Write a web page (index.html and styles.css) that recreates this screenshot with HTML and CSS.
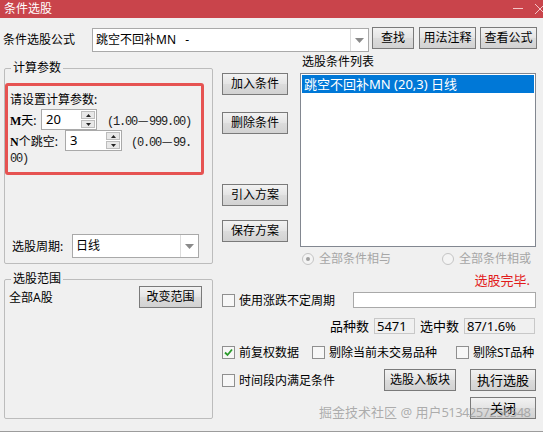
FILE: index.html
```html
<!DOCTYPE html>
<html lang="zh-CN">
<head>
    <meta charset="UTF-8">
    <title>条件选股</title>
    <link rel="stylesheet" href="styles.css">
</head>
<body>
    <div class="window">
        <div class="titlebar">
            <span class="title">条件选股</span>
            <div class="caption-btns">
                <svg class="cap-min" width="12" height="10" viewBox="0 0 12 10"><line x1="1" y1="6.5" x2="11" y2="6.5" stroke="#f3c6c8" stroke-width="1"/></svg>
                <svg class="cap-close" width="12" height="12" viewBox="0 0 12 12"><path d="M1 1 L11 11 M11 1 L1 11" stroke="#f3c6c8" stroke-width="1"/></svg>
            </div>
        </div>

        <div class="formula-row">
            <span class="formula-label">条件选股公式</span>
            <div class="combo formula-combo">
                <span class="combo-text">跳空不回补MN&nbsp;&nbsp;&nbsp;-</span>
                <span class="combo-arrow"><svg width="9" height="5" viewBox="0 0 9 5"><path d="M0 0 H9 L4.5 5 Z" fill="#8a8a8a"/></svg></span>
            </div>
            <button class="btn btn-find">查找</button>
            <button class="btn btn-usage">用法注释</button>
            <button class="btn btn-view">查看公式</button>
        </div>

        <div class="main">
            <div class="left-col">
                <fieldset class="group calc-group">
                    <legend>计算参数</legend>
                    <div class="param-box">
                        <div class="prompt">请设置计算参数:</div>
                        <div class="param-row">
                            <span class="param-label m-label"><span class="serif">M</span>天:</span>
                            <div class="spin spin-m">
                                <span class="spin-value">20</span>
                                <span class="spin-btns">
                                    <span class="spin-btn"><svg width="5" height="3" viewBox="0 0 5 3"><path d="M0 3 H5 L2.5 0 Z" fill="#222"/></svg></span>
                                    <span class="spin-btn"><svg width="5" height="3" viewBox="0 0 5 3"><path d="M0 0 H5 L2.5 3 Z" fill="#222"/></svg></span>
                                </span>
                            </div>
                            <span class="range range-m">(1.00<span class="dash">—</span>999.00)</span>
                        </div>
                        <div class="param-row">
                            <span class="param-label n-label"><span class="serif">N</span>个跳空:</span>
                            <div class="spin spin-n">
                                <span class="spin-value">3</span>
                                <span class="spin-btns">
                                    <span class="spin-btn"><svg width="5" height="3" viewBox="0 0 5 3"><path d="M0 3 H5 L2.5 0 Z" fill="#222"/></svg></span>
                                    <span class="spin-btn"><svg width="5" height="3" viewBox="0 0 5 3"><path d="M0 0 H5 L2.5 3 Z" fill="#222"/></svg></span>
                                </span>
                            </div>
                            <span class="range range-n">(0.00<span class="dash">—</span>99.</span>
                        </div>
                        <div class="range range-wrap">00)</div>
                    </div>
                    <div class="period-row">
                        <span class="period-label">选股周期:</span>
                        <div class="combo period-combo">
                            <span class="combo-text">日线</span>
                            <span class="combo-arrow"><svg width="9" height="5" viewBox="0 0 9 5"><path d="M0 0 H9 L4.5 5 Z" fill="#8a8a8a"/></svg></span>
                        </div>
                    </div>
                </fieldset>

                <fieldset class="group range-group">
                    <legend>选股范围</legend>
                    <div class="scope-row">
                        <span>全部A股</span>
                        <button class="btn btn-scope">改变范围</button>
                    </div>
                </fieldset>
            </div>

            <div class="right-col">
                <div class="top-area">
                    <div class="btn-col">
                        <button class="btn side-btn">加入条件</button>
                        <button class="btn side-btn btn-del">删除条件</button>
                        <button class="btn side-btn btn-import">引入方案</button>
                        <button class="btn side-btn btn-save">保存方案</button>
                    </div>
                    <div class="list-col">
                        <div class="list-title">选股条件列表</div>
                        <div class="listbox">
                            <div class="list-item selected">跳空不回补MN (20,3) 日线</div>
                        </div>
                    </div>
                </div>

                <div class="radio-row">
                    <span class="radio-item radio-and"><span class="radio checked"></span>全部条件相与</span>
                    <span class="radio-item radio-or"><span class="radio"></span>全部条件相或</span>
                </div>

                <div class="status-row">选股完毕.</div>

                <div class="check-row period-check">
                    <span class="check-item"><span class="checkbox"></span>使用涨跌不定周期</span>
                    <div class="text-field"></div>
                </div>

                <div class="count-row">
                    <span>品种数</span>
                    <span class="count-field count-total">5471</span>
                    <span class="count-label">选中数</span>
                    <span class="count-field count-hit">87/1.6%</span>
                </div>

                <div class="check-row option-row">
                    <span class="check-item opt-fq">
                        <span class="checkbox">
                            <svg width="11" height="11" viewBox="0 0 11 11"><path d="M2 5.5 L4.5 8 L9 2.5" fill="none" stroke="#2a9a2a" stroke-width="1.8"/></svg>
                        </span>前复权数据
                    </span>
                    <span class="check-item opt-skip"><span class="checkbox"></span>剔除当前未交易品种</span>
                    <span class="check-item"><span class="checkbox"></span>剔除ST品种</span>
                </div>

                <div class="action-row">
                    <span class="check-item"><span class="checkbox"></span>时间段内满足条件</span>
                    <button class="btn btn-block">选股入板块</button>
                    <button class="btn btn-run">执行选股</button>
                </div>

                <div class="close-row">
                    <button class="btn btn-close">关闭</button>
                </div>
            </div>
        </div>

        <div class="watermark">掘金技术社区 @ 用户<span class="wm-digits">5134257256548</span></div>
    </div>
</body>
</html>
```

FILE: styles.css
```css
* {
    box-sizing: border-box;
}
body {
    margin: 0;
    background-color: #f0f0f0;
    font-family: "Noto Sans", "Noto Sans CJK SC", sans-serif;
    font-size: 12px;
    color: #000;
}
.window {
    position: relative;
    width: 543px;
    height: 432px;
    overflow: hidden;
    border-bottom: 1px solid #9c9c9c;
}

/* title bar */
.titlebar {
    display: flex;
    align-items: center;
    height: 18px;
    padding-left: 4px;
    background-color: #c9444b;
    color: #fff;
    line-height: 18px;
}
.title {
    flex: 1;
}
.caption-btns {
    display: flex;
    align-items: center;
    gap: 10px;
    margin-right: -3px;
}
.cap-min {
    margin-top: -4px;
}

/* buttons and inputs */
.btn {
    height: 22px;
    padding: 0;
    border: 1px solid #7a7a7a;
    background: linear-gradient(#f2f2f2, #e4e4e4 50%, #dcdcdc 51%, #d2d2d2);
    font-family: inherit;
    font-size: 12px;
    color: #000;
    line-height: 18px;
}
.combo {
    display: flex;
    height: 24px;
    background-color: #fff;
    border: 1px solid #a9a9a9;
}
.combo-text {
    flex: 1;
    padding-left: 2px;
    line-height: 22px;
}
.combo-arrow {
    display: flex;
    align-items: center;
    justify-content: center;
    width: 18px;
    border-left: 1px solid #dcdcdc;
}

/* formula row */
.formula-row {
    display: flex;
    align-items: flex-start;
    height: 37px;
    padding: 10px 0 0 3px;
}
.formula-label {
    width: 89px;
    line-height: 24px;
}
.formula-combo {
    width: 277px;
}
.formula-combo .combo-text {
    padding-left: 3px;
}
.btn-find {
    width: 42px;
    margin: -1px 0 0 3px;
}
.btn-usage {
    width: 57px;
    margin: -1px 0 0 5px;
}
.btn-view {
    width: 57px;
    margin: -1px 0 0 4px;
}

/* main area */
.main {
    display: grid;
    grid-template-columns: 209px 314px;
    column-gap: 9px;
    padding-left: 4px;
}
.group {
    margin: 0;
    padding: 0;
    border: 1px solid #bcbcbc;
    border-radius: 2px;
    min-width: 0;
}
.group legend {
    margin-left: 6px;
    padding: 0 2px;
    line-height: 14px;
}
.calc-group {
    margin-top: 6px;
    height: 203px;
}
.param-box {
    width: 199px;
    height: 92px;
    margin-top: 8px;
    padding: 5px 0 0 2px;
    border: 3px solid #e65352;
    border-radius: 3px;
}
.prompt {
    line-height: 18px;
}
.param-row {
    display: flex;
    align-items: center;
    height: 21px;
}
.param-label {
    flex-shrink: 0;
}
.m-label {
    width: 31px;
}
.n-label {
    width: 55px;
}
.serif {
    font-family: "Liberation Serif", serif;
    font-size: 12px;
    font-weight: bold;
}
.spin {
    display: flex;
    height: 21px;
    background-color: #fff;
    border: 1px solid #a9a9a9;
}
.spin-m {
    width: 56px;
}
.spin-n {
    width: 57px;
}
.spin-value {
    flex: 1;
    padding-left: 4px;
    font-size: 13px;
    line-height: 19px;
}
.spin-btns {
    display: flex;
    flex-direction: column;
    width: 16px;
    padding: 1px;
    gap: 1px;
}
.spin-btn {
    display: flex;
    flex: 1;
    align-items: center;
    justify-content: center;
    background-color: #e8e8e8;
    border: 1px solid #bdbdbd;
}

/* range hints use a narrow fixed pitch with a full-width dash */
.range {
    font-family: "Liberation Mono", monospace;
    font-size: 12px;
    letter-spacing: -1.2px;
    color: #222;
    white-space: nowrap;
}
.dash {
    display: inline-block;
    width: 12px;
    font-family: "Noto Sans CJK SC", sans-serif;
    font-size: 12px;
    letter-spacing: 0;
    text-align: center;
}
.range-m {
    margin-left: 10px;
}
.range-n {
    margin-left: 9px;
}
.range-wrap {
    margin-top: -1px;
    line-height: 18px;
}
.period-row {
    display: flex;
    align-items: center;
    margin-top: 59px;
    padding-left: 7px;
}
.period-label {
    width: 60px;
}
.period-combo {
    width: 127px;
}
.period-combo .combo-text {
    padding-left: 3px;
}
.range-group {
    margin-top: 8px;
    height: 147px;
}
.scope-row {
    display: flex;
    align-items: center;
    height: 22px;
    padding: 0 10px 0 4px;
}
.btn-scope {
    width: 63px;
    margin-left: auto;
}

/* right column */
.top-area {
    display: flex;
}
.btn-col {
    display: flex;
    flex-direction: column;
    width: 66px;
    padding-top: 18px;
}
.side-btn {
    width: 66px;
}
.btn-del {
    margin-top: 17px;
}
.btn-import {
    margin-top: 50px;
}
.btn-save {
    margin-top: 14px;
}
.list-col {
    width: 236px;
    margin-left: 12px;
}
.list-title {
    height: 14px;
    padding-left: 2px;
    line-height: 14px;
}
.listbox {
    height: 174px;
    margin-top: 4px;
    padding: 1px;
    background-color: #fff;
    border: 1px solid #828790;
}
.list-item {
    height: 18px;
    padding-left: 2px;
    font-size: 13px;
    line-height: 18px;
}
.list-item.selected {
    background-color: #0078d7;
    color: #fff;
}
.radio-row {
    display: flex;
    height: 16px;
    margin-top: 4px;
    padding-left: 80px;
    color: #a6a6a6;
    line-height: 16px;
    white-space: nowrap;
}
.radio-item {
    display: flex;
    align-items: center;
    gap: 5px;
}
.radio-and {
    width: 140px;
}
.radio {
    position: relative;
    width: 12px;
    height: 12px;
    border: 1px solid #c4c4c4;
    border-radius: 50%;
    background-color: #f4f4f4;
}
.radio.checked::after {
    content: "";
    position: absolute;
    left: 3px;
    top: 3px;
    width: 4px;
    height: 4px;
    border-radius: 50%;
    background-color: #a0a0a0;
}
.status-row {
    height: 16px;
    margin-top: 5px;
    padding-right: 6px;
    color: #e21c1c;
    font-size: 13px;
    line-height: 16px;
    text-align: right;
}
.check-row {
    display: flex;
    align-items: center;
}
.check-item {
    display: flex;
    align-items: center;
    gap: 4px;
    white-space: nowrap;
}
.checkbox {
    display: flex;
    align-items: center;
    justify-content: center;
    width: 13px;
    height: 13px;
    border: 1px solid #8f8f8f;
    background-color: #f7f7f7;
}
.period-check {
    height: 18px;
    margin-top: 3px;
}
.text-field {
    width: 183px;
    height: 16px;
    margin-left: auto;
    background-color: #fff;
    border: 1px solid #a9a9a9;
}
.count-row {
    display: flex;
    align-items: center;
    justify-content: flex-end;
    height: 17px;
    margin-top: 8px;
    padding-right: 1px;
    font-size: 13px;
}
.count-field {
    height: 16px;
    margin-left: 5px;
    padding-left: 2px;
    border: 1px solid #c8c8c8;
    line-height: 14px;
}
.count-total {
    width: 41px;
}
.count-label {
    margin-left: 5px;
}
.count-hit {
    width: 71px;
}
.option-row {
    height: 18px;
    margin-top: 9px;
}
.opt-fq {
    width: 90px;
}
.opt-skip {
    width: 144px;
}
.action-row {
    display: flex;
    align-items: center;
    height: 22px;
    margin-top: 8px;
}
.btn-block {
    width: 72px;
    margin-left: auto;
}
.btn-run {
    width: 66px;
    margin-left: 14px;
    font-size: 13px;
}
.close-row {
    display: flex;
    justify-content: flex-end;
    margin-top: 6px;
}
.btn-close {
    width: 66px;
    font-size: 13px;
}

/* site watermark over the bottom edge */
.watermark {
    position: absolute;
    left: 319px;
    top: 403px;
    font-size: 13px;
    line-height: 18px;
    color: rgba(150, 150, 150, 0.75);
    white-space: nowrap;
}
.wm-digits {
    letter-spacing: -0.6px;
}
```
